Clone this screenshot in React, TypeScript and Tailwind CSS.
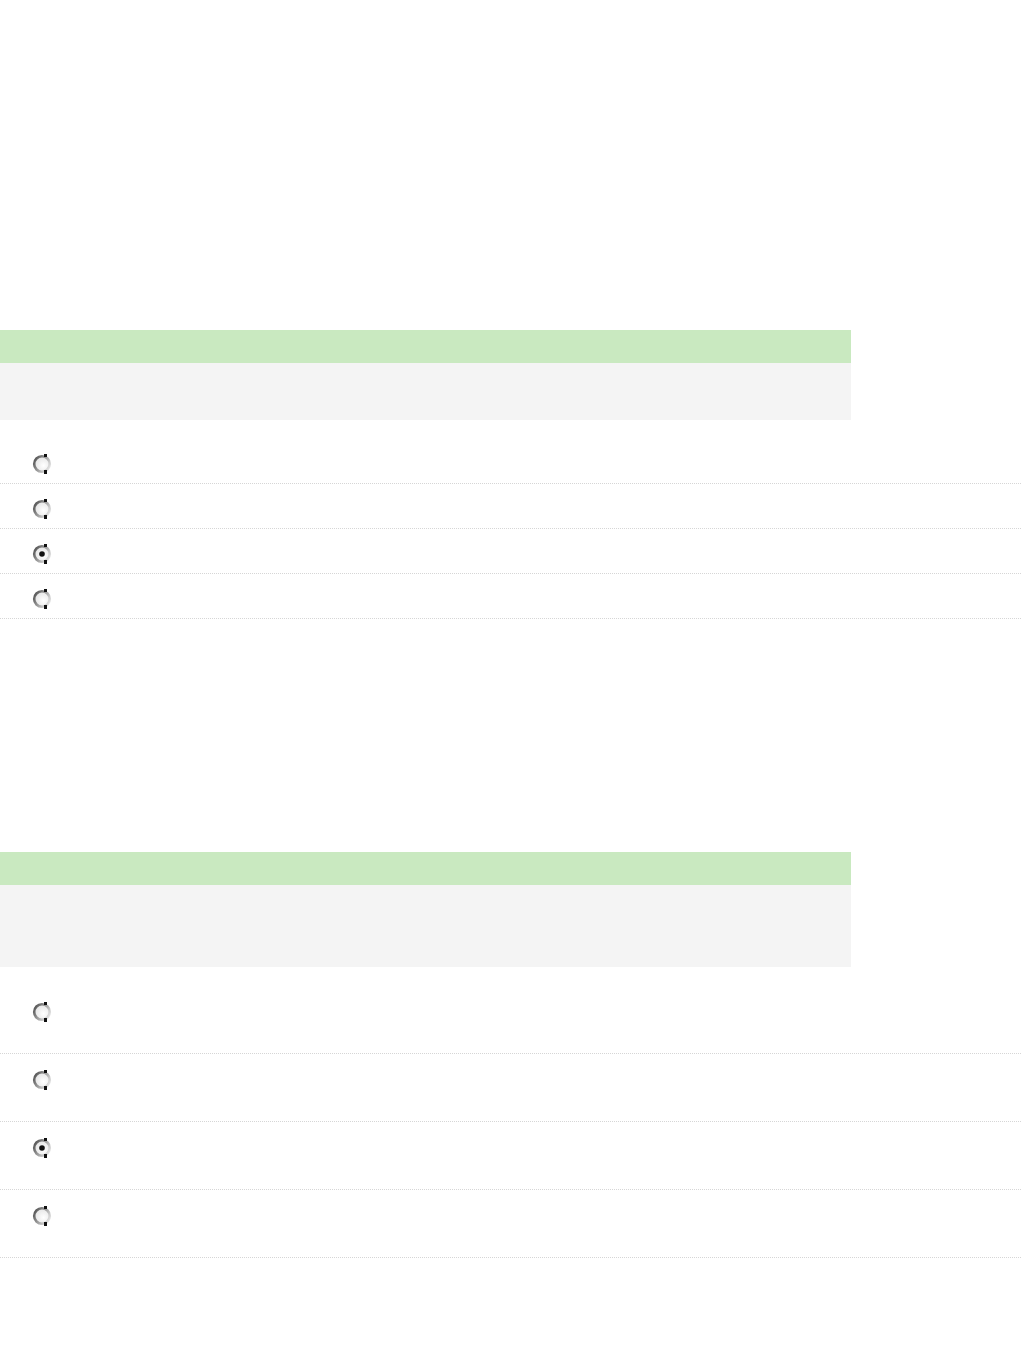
const sections = [
  { grayHeight: 'h-[57px]', rowClass: 'pt-[15px] pb-[9px]', rows: [false, false, true, false], top: 'pt-[330px]' },
  { grayHeight: 'h-[82px]', rowClass: 'pt-[16px] pb-[31px]', rows: [false, false, true, false], top: 'pt-[233px]' },
];

function Radio({ checked }: { checked: boolean }) {
  return (
    <svg width="20" height="20" viewBox="0 0 20 20" className="block">
      <defs>
        <linearGradient id="rg" x1="0" y1="0.2" x2="1" y2="0.8">
          <stop offset="0" stopColor="#555" />
          <stop offset="0.45" stopColor="#999" />
          <stop offset="1" stopColor="#e8e8e8" />
        </linearGradient>
        <radialGradient id="rf" cx="0.6" cy="0.6" r="0.6">
          <stop offset="0" stopColor="#fff" />
          <stop offset="1" stopColor="#e4e4e4" />
        </radialGradient>
      </defs>
      <circle cx="10" cy="10" r="7.8" fill="url(#rf)" stroke="url(#rg)" strokeWidth="2.6" />
      <rect x="12" y="0" width="3" height="3" fill="#111" />
      <rect x="12" y="16" width="3" height="4" fill="#111" />
      {checked && <circle cx="10" cy="10" r="2.8" fill="#111" />}
    </svg>
  );
}

export default function App() {
  return (
    <div className="min-h-[1345px] w-full bg-white font-['Liberation_Sans',sans-serif]">
      {sections.map((s, i) => (
        <div key={i} className={s.top}>
          <div className="w-[851px]">
            <div className="h-[33px] bg-[#c9e9c0]" />
            <div className={`${s.grayHeight} bg-[#f4f4f4]`} />
          </div>
          <ul className="mt-[19px]">
            {s.rows.map((checked, j) => (
              <li key={j} className={`${s.rowClass} pl-[32px] border-b border-dotted border-[#d6d6d6]`}>
                <Radio checked={checked} />
              </li>
            ))}
          </ul>
        </div>
      ))}
    </div>
  );
}
